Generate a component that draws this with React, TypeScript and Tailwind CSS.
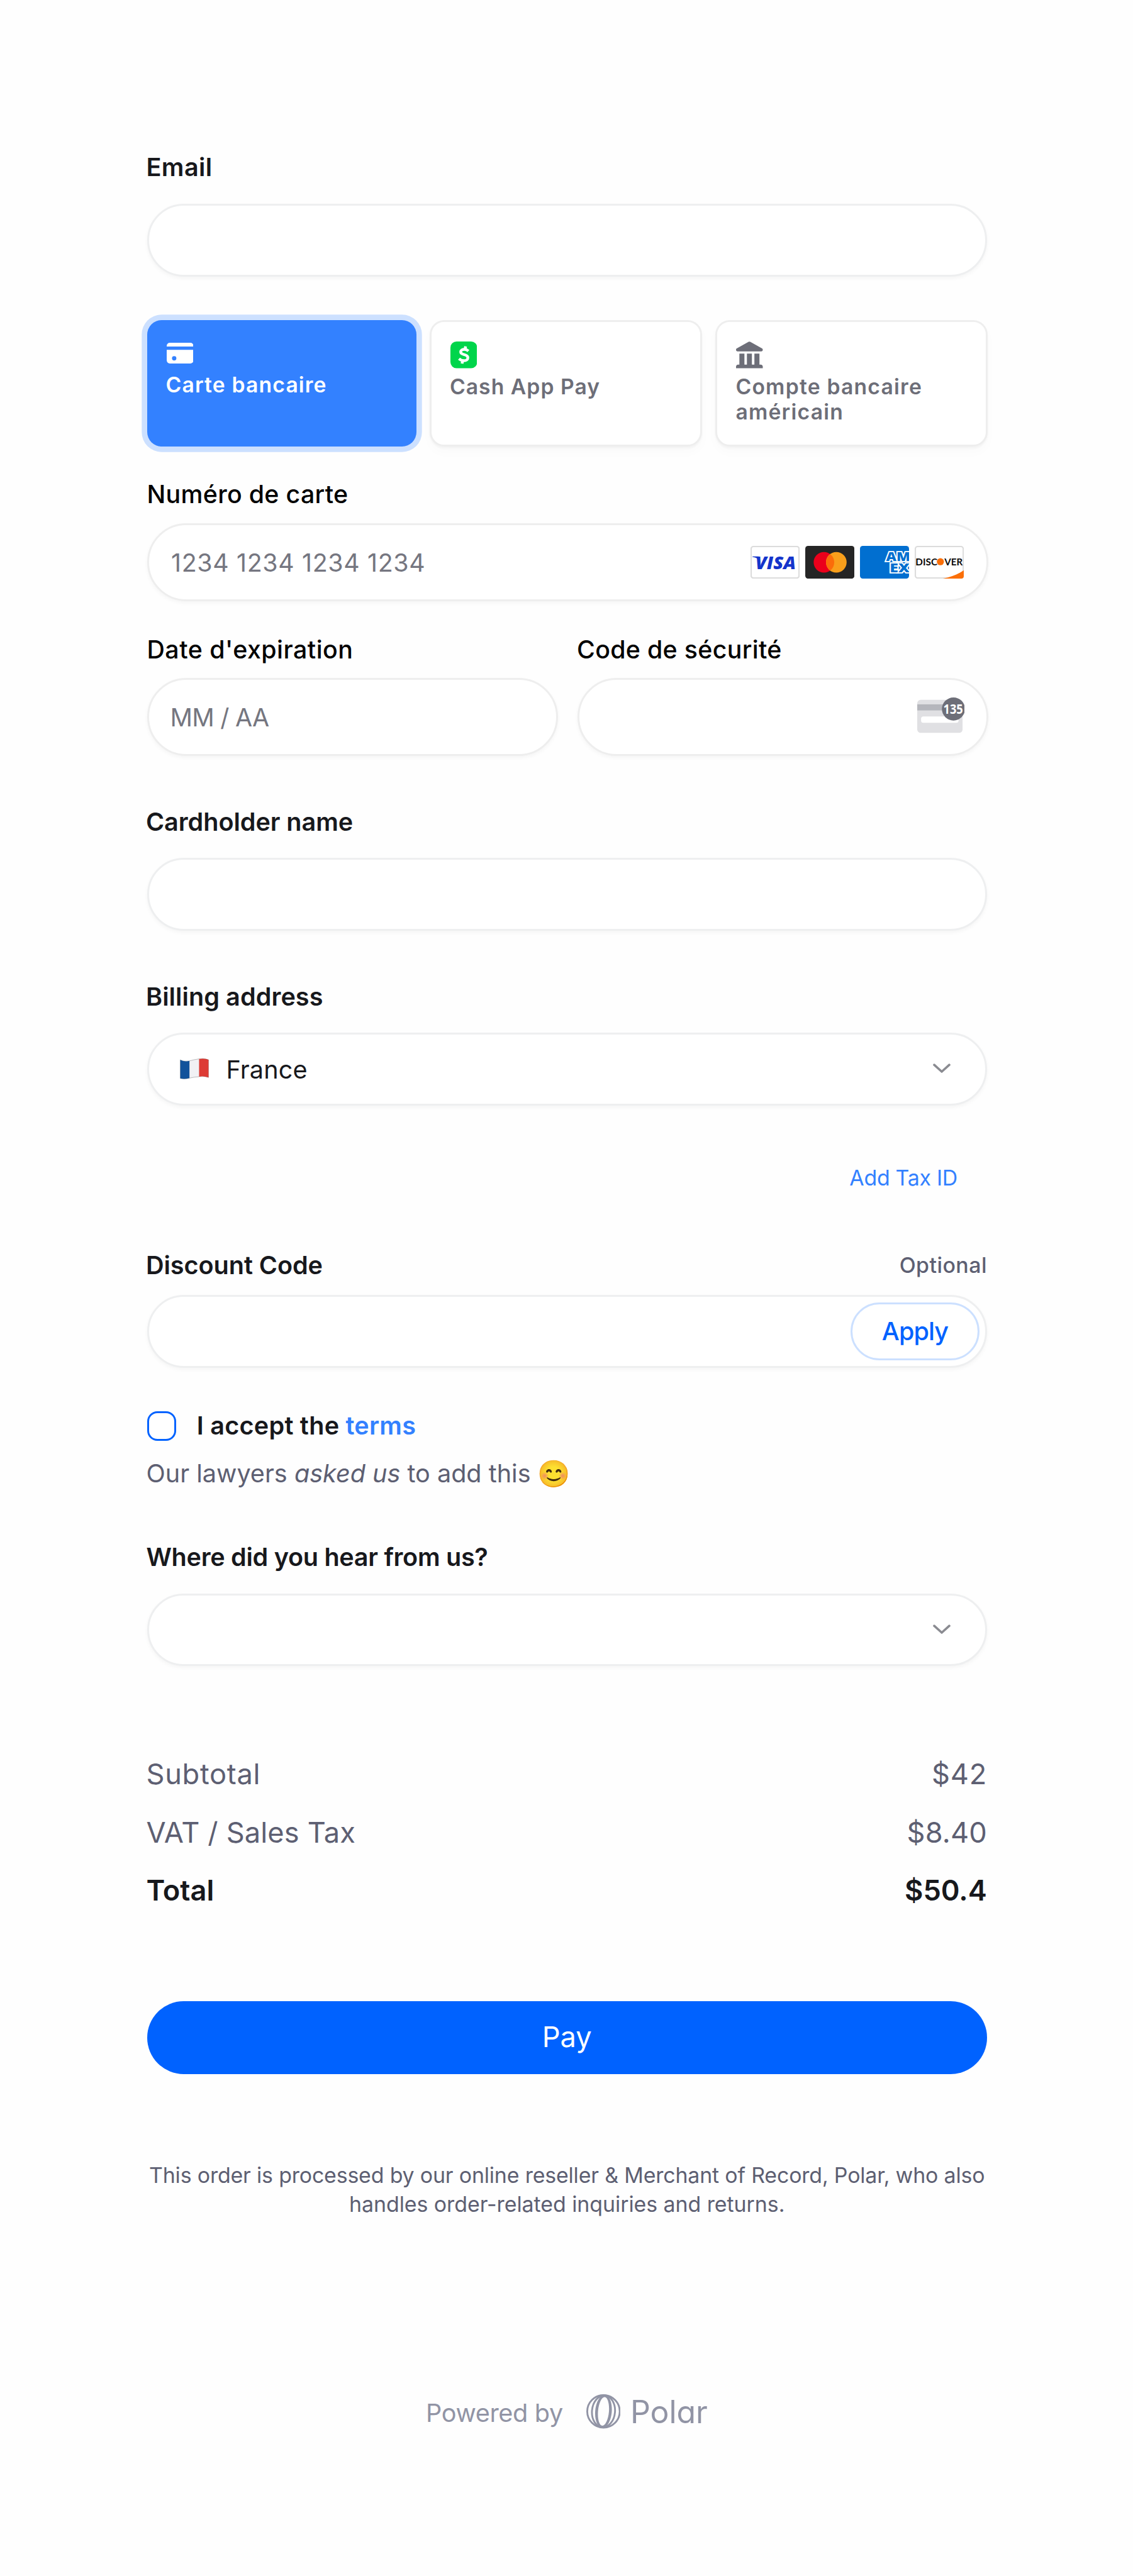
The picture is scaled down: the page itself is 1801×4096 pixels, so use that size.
import type { ReactNode } from "react";

const box = "rounded-full border-[3px] bg-white";
const polarBox = `${box} h-[115.8px] border-[#eeeff0] shadow-[0_3px_6px_rgba(0,0,0,0.04)]`;
const stripeBox = `${box} h-[124.5px] border-[#eeeeee] shadow-[0_3px_6px_rgba(0,0,0,0.04)]`;

function Label({ className, children }: { className: string; children: ReactNode }) {
  return (
    <div className={`h-12 whitespace-nowrap text-[39.6px] font-[560] leading-[48px] text-[#17181c] ${className}`}>
      {children}
    </div>
  );
}

function StripeLabel({ className, children }: { className: string; children: ReactNode }) {
  return (
    <div className={`h-12 whitespace-nowrap text-[39.3px] font-medium leading-[49.500px] text-black ${className}`}>
      {children}
    </div>
  );
}

function Chevron() {
  return (
    <svg className="mr-[55px] mb-[2px] h-[16px] w-[28px]" viewBox="0 0 28 16" fill="none">
      <path d="M2 2.2 L14 13 L26 2.2" stroke="#8a8b91" strokeWidth="3.6" strokeLinecap="round" strokeLinejoin="round" />
    </svg>
  );
}

function CardGlyph() {
  return (
    <svg className="h-[33px] w-[42.5px]" viewBox="0 0 44 34" fill="#fff">
      <path d="M5 0h34a5 5 0 0 1 5 5v1H0V5a5 5 0 0 1 5-5z" />
      <path
        fillRule="evenodd"
        d="M0 11.5h44V29a5 5 0 0 1-5 5H5a5 5 0 0 1-5-5zM12.3 21.9a3.6 3.6 0 1 0 0 7.2 3.6 3.6 0 0 0 0-7.2z"
      />
    </svg>
  );
}

function CashAppGlyph() {
  return (
    <svg className="h-[42.5px] w-[42.5px]" viewBox="0 0 44 44">
      <rect width="44" height="44" rx="10" fill="#00d54b" />
      <g fill="none" stroke="#fff" strokeWidth="4.6">
        <path d="M29.6 15.6C27.6 13.8 25.3 13 22.8 13c-3.3 0-5.9 1.5-5.9 4.2 0 6 11.8 3 11.8 9.4 0 3-2.8 5-6.4 5-3.2 0-6-1.2-8.2-3.2" />
        <path d="M25 8l-1.1 5.4M20.2 31l-1.1 5.4" />
      </g>
    </svg>
  );
}

function BankGlyph() {
  return (
    <svg className="h-[42.5px] w-[42.5px]" viewBox="0 0 44 44" fill="#6d6e78">
      <path d="M20.6.6a2.6 2.6 0 0 1 2.8 0L42.8 11.4A2.4 2.4 0 0 1 44 13.5V14a2.2 2.2 0 0 1-2.2 2.2H2.2A2.2 2.2 0 0 1 0 14v-.5c0-.9.5-1.700 1.200-2.100z" />
      <path d="M5.500 20h8.300v18.500H5.500zM17.900 20h8.200v18.500h-8.200zM30.200 20h8.300v18.500h-8.300z" />
      <path d="M0 41.500c0-1.900 1.400-3.500 3.300-3.500h37.400c1.900 0 3.300 1.600 3.300 3.500V44H0z" />
    </svg>
  );
}

const brand = "h-[52.1px] w-[78.2px]";

function Visa() {
  return (
    <svg className={brand} viewBox="0 0 243 162">
      <rect x="3" y="3" width="237" height="156" rx="12" fill="#fff" stroke="#dcdcdc" strokeWidth="7" />
      <path d="M10 52h30l8 26C40 64 27 56 10 55z" fill="#1434cb" />
      <text
        x="24"
        y="115.500"
        textLength="200"
        lengthAdjust="spacingAndGlyphs"
        fontFamily="Open Sans"
        fontWeight="800"
        fontStyle="italic"
        fontSize="88"
        fill="#1434cb"
      >
        VISA
      </text>
    </svg>
  );
}

function Mastercard() {
  return (
    <svg className={brand} viewBox="0 0 243 162">
      <rect width="243" height="162" rx="14" fill="#252525" />
      <circle cx="92.500" cy="81" r="51" fill="#eb001b" />
      <circle cx="153.500" cy="81" r="51" fill="#f99f1b" />
      <path d="M123 40.200a51 51 0 0 1 0 81.600 51 51 0 0 1 0-81.600z" fill="#fb6d0a" />
    </svg>
  );
}

function Amex() {
  return (
    <svg className={`${brand} rounded-[4.500px]`} viewBox="0 0 243 162">
      <rect width="243" height="162" fill="#016fd0" />
      <g
        fontFamily="Open Sans"
        fontWeight="800"
        fontSize="61"
        fill="#016fd0"
        stroke="#fff"
        strokeWidth="11"
        style={{ paintOrder: "stroke" }}
      >
        <text x="129" y="76" textLength="119" lengthAdjust="spacingAndGlyphs">
          AM
        </text>
        <text x="147" y="131" textLength="98" lengthAdjust="spacingAndGlyphs">
          EX
        </text>
      </g>
    </svg>
  );
}

function Discover() {
  return (
    <svg className={`${brand} rounded-[4px]`} viewBox="0 0 243 162">
      <rect x="3" y="3" width="237" height="156" rx="12" fill="#fff" stroke="#dcdcdc" strokeWidth="7" />
      <path d="M138 162c44-8 78-22 105-42v42z" fill="#fb6f08" />
      <g fontFamily="Lato" fontWeight="700" fontSize="46" fill="#0b0b0b">
        <text x="4" y="96" textLength="108" lengthAdjust="spacingAndGlyphs">
          DISC
        </text>
        <text x="147" y="96" textLength="90" lengthAdjust="spacingAndGlyphs">
          VER
        </text>
      </g>
      <circle cx="127" cy="78.500" r="17.500" fill="#fb6f08" />
    </svg>
  );
}

function CvcGlyph() {
  return (
    <svg className="mr-[34.500px] mb-[5px] h-[56.300px] w-[75px]" viewBox="0 0 233 175">
      <rect x="0" y="12" width="224" height="163" rx="17" fill="#e0e0e3" />
      <rect x="0" y="34" width="224" height="30" fill="#b5b6bc" />
      <rect x="19" y="94" width="185" height="31" rx="11" fill="#fff" />
      <circle cx="179" cy="57" r="57" fill="#6d6e78" />
      <text
        x="129"
        y="82"
        textLength="97"
        lengthAdjust="spacingAndGlyphs"
        fontFamily="Open Sans"
        fontWeight="700"
        fontSize="66"
        fill="#fff"
      >
        135
      </text>
    </svg>
  );
}

function Flag() {
  return (
    <svg className="mb-[2px] h-[33px] w-[46px]" viewBox="0 0 46 33">
      <path d="M.5 2.200Q7 5.500 15.500 3.800V31.200Q7 33.600.5 31.800z" fill="#11529b" />
      <path d="M15.500 3.800Q22 1.800 30.500.7V29Q22 29.600 15.500 31.200z" fill="#f1f1f4" stroke="#d3d3d8" strokeWidth=".6" />
      <path d="M30.500.7Q40-.6 45.500 2V30.300Q38 27.800 30.500 29z" fill="#dd3b35" />
      <path d="M.5 2.200Q7 5.500 15.500 3.800 22 1.800 30.500.7 40-.6 45.500 2V30.300Q38 27.800 30.500 29 22 29.600 15.500 31.200 7 33.600.5 31.800z" fill="none" stroke="#00000033" strokeWidth=".9" />
    </svg>
  );
}

function PolarMark() {
  return (
    <svg className="ml-[37px] h-[54.600px] w-[54.600px]" viewBox="0 0 170 170" fill="none" stroke="#9194a5">
      <circle cx="85" cy="85" r="80.500" strokeWidth="9" />
      <g transform="rotate(5 85 85)">
        <ellipse cx="85" cy="85" rx="57" ry="79" strokeWidth="9" />
        <path
          fill="#9194a5"
          stroke="none"
          fillRule="evenodd"
          d="M85 3c23 0 41 37 41 82s-18 82-41 82-41-37-41-82S62 3 85 3zm0 11c-15 0-27 32-27 71s12 71 27 71 27-32 27-71-12-71-27-71z"
        />
      </g>
    </svg>
  );
}

function Amount({ label, value, className }: { label: string; value: string; className: string }) {
  return (
    <div className={`flex h-14 items-center justify-between text-[45.200px] leading-[56px] ${className}`}>
      <span className="-ml-px">{label}</span>
      <span>{value}</span>
    </div>
  );
}

export default function App() {
  return (
    <div className="h-[4096px] w-[1801px] overflow-hidden bg-[#fefefe] font-['Inter',sans-serif]">
      <form className="ml-[233.500px] flex w-[1335.400px] flex-col pt-[242.300px]">
        <Label className="-ml-px tracking-[0.400px]">Email</Label>
        <div className={`mt-[33.900px] ${polarBox}`} />

        <div className="mt-[69.500px] flex h-[200.700px] w-[1337px] text-[33.700px] font-semibold leading-[40.100px] text-[#6d6e78]">
          <div className="w-[428.600px] shrink-0 rounded-[23px] bg-[#3381ff] pt-[35.700px] pl-[31px] text-white shadow-[0_0_0_8.700px_#cce0ff]">
            <CardGlyph />
            <div className="mt-[14.200px] -ml-px tracking-[1.150px]">Carte bancaire</div>
          </div>
          <div className="ml-[20.800px] w-[433px] shrink-0 rounded-[23px] border-[3px] border-[#eeeeee] bg-white pt-[30.700px] pl-[30px] shadow-[0_3px_3px_rgba(0,0,0,0.030),0_9px_18px_rgba(0,0,0,0.020)]">
            <CashAppGlyph />
            <div className="mt-[9.200px] -ml-px tracking-[1.030px]">Cash App Pay</div>
          </div>
          <div className="ml-[21.500px] w-[433px] shrink-0 rounded-[23px] border-[3px] border-[#eeeeee] bg-white pt-[30.700px] pl-[30px] shadow-[0_3px_3px_rgba(0,0,0,0.030),0_9px_18px_rgba(0,0,0,0.020)]">
            <BankGlyph />
            <div className="mt-[9.200px] -ml-px tracking-[1.200px]">
              Compte bancaire
              <br />
              américain
            </div>
          </div>
        </div>

        <StripeLabel className="mt-[51.300px] tracking-[0.320px]">Numéro de carte</StripeLabel>
        <div className={`mt-[22.200px] flex w-[1337px] items-center justify-between pr-[35.500px] pl-[35.500px] ${stripeBox}`}>
          <span className="pt-[3px] text-[39.300px] tracking-[0.670px] text-[#757680]">1234 1234 1234 1234</span>
          <div className="flex gap-[8.900px]">
            <Visa />
            <Mastercard />
            <Amex />
            <Discover />
          </div>
        </div>

        <div className="mt-[51.500px] flex w-[1337px] justify-between">
          <div className="w-[653px]">
            <StripeLabel className="tracking-[0.500px]">Date d'expiration</StripeLabel>
            <div className={`mt-[22.100px] flex items-center pl-[34px] ${stripeBox}`}>
              <span className="pt-[3px] text-[39.300px] tracking-[-0.760px] text-[#757680]">MM / AA</span>
            </div>
          </div>
          <div className="w-[652.500px]">
            <StripeLabel className="-ml-px tracking-[0.320px]">Code de sécurité</StripeLabel>
            <div className={`mt-[22.100px] flex items-center justify-end ${stripeBox}`}>
              <CvcGlyph />
            </div>
          </div>
        </div>

        <Label className="mt-[80.500px] -ml-[1.500px] tracking-[-0.050px]">Cardholder name</Label>
        <div className={`mt-[33.600px] ${polarBox}`} />

        <Label className="mt-[80.600px] -ml-[1.500px] tracking-[0.080px]">Billing address</Label>
        <div className={`mt-[33.500px] flex items-center justify-between pl-[49px] ${polarBox}`}>
          <div className="flex items-center gap-[28px]">
            <Flag />
            <span className="pt-px text-[39.600px] leading-[48px] tracking-[0.130px] text-[#17181c]">France</span>
          </div>
          <Chevron />
        </div>

        <div className="mt-[90.600px] mr-[47px] h-12 self-end text-[33.900px] leading-[48px] tracking-[-0.290px] text-[#3381ff]">
          Add Tax ID
        </div>

        <div className="mt-[91.800px] flex justify-between">
          <Label className="-ml-[1.500px] tracking-[-0.050px]">Discount Code</Label>
          <span className="-mt-[0.500px] text-[33.900px] font-medium leading-[48px] tracking-[0.450px] text-[#5d5f72]">Optional</span>
        </div>
        <div className={`mt-[22.600px] flex items-center justify-end pr-[8.700px] ${polarBox}`}>
          <div className="flex h-[92.600px] w-[205.500px] items-center justify-center rounded-full border-[3px] border-[#cce0ff] text-[39.600px] font-medium leading-[48px] tracking-[-0.940px] text-[#0062ff]">
            Apply
          </div>
        </div>

        <div className="mt-[69.500px] flex h-[46.300px] items-center gap-[33px]">
          <div className="h-[46.300px] w-[46.300px] rounded-[16px] border-[3px] border-[#0062ff] bg-white" />
          <Label className="tracking-[0.250px]">
            I accept the <span className="text-[#3381ff]">terms</span>
          </Label>
        </div>
        <div className="mt-[28.200px] -ml-px flex h-12 items-center whitespace-pre text-[39.600px] leading-[48px] text-[#5d5f72]">
          Our lawyers <i>asked us</i> to add this
          <span className="ml-[10px] text-[42px]">😊</span>
        </div>

        <Label className="mt-[84.700px] -ml-px pt-px tracking-[-0.280px]">Where did you hear from us?</Label>
        <div className={`mt-[34.200px] flex items-center justify-end ${polarBox}`}>
          <Chevron />
        </div>

        <div className="mt-[143.700px] flex flex-col gap-[36.600px]">
          <Amount label="Subtotal" value="$42" className="tracking-[0.700px] text-[#5d5f72]" />
          <Amount label="VAT / Sales Tax" value="$8.40" className="tracking-[0.140px] text-[#5d5f72]" />
          <Amount label="Total" value="$50.4" className="font-[580] text-[#17181c]" />
        </div>

        <div className="mt-[148px] flex h-[115.400px] items-center justify-center rounded-full bg-[#0062ff] pb-[3px] text-[45.200px] leading-[56px] text-white">
          Pay
        </div>

        <p className="mt-[138px] text-center text-[33.900px] leading-[46.500px] tracking-[-0.170px] whitespace-nowrap text-[#5d5f72]">
          This order is processed by our online reseller &amp; Merchant of Record, Polar, who also
          <br />
          <span className="tracking-[-0.050px]">handles order-related inquiries and returns.</span>
        </p>

        <div className="mt-[278.500px] ml-[443.500px] flex h-[54.600px] items-center text-[#9194a5]">
          <span className="pt-[4px] text-[39.600px] leading-[48px] tracking-[-0.340px]">Powered by</span>
          <PolarMark />
          <span className="ml-[15.600px] text-[50px] leading-[54px] tracking-[-0.100px] [font-feature-settings:'cv11']">Polar</span>
        </div>
      </form>
    </div>
  );
}
